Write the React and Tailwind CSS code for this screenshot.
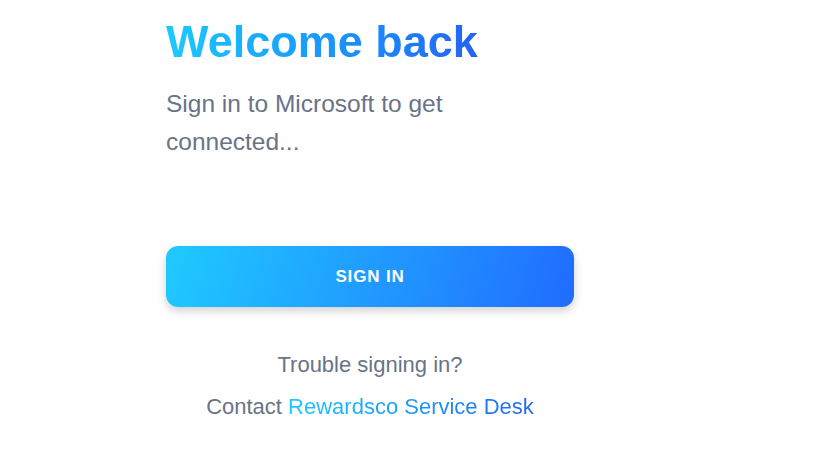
export default function App() {
  return (
    <div
      className="min-h-screen bg-white"
      style={{ fontFamily: '"Liberation Sans", Arial, sans-serif' }}
    >
      <div className="w-[408px] ml-[166px] pt-[15px]">
        <h1 className="text-[45px] leading-[54px] font-bold bg-gradient-to-r from-[#1fc9ff] to-[#2563f4] bg-clip-text text-transparent w-max">
          Welcome back
        </h1>
        <p className="mt-4 text-[24.5px] leading-[38px] text-[#697387] w-[330px]">
          Sign in to Microsoft to get connected...
        </p>
        <button className="mt-[85px] w-full h-[61px] rounded-xl bg-linear-[105deg] from-[#1fcaff] to-[#216cff] text-white font-bold text-[17px] tracking-wider shadow-[0_4px_10px_rgba(0,0,0,0.18)]">
          SIGN IN
        </button>
        <div className="mt-[37px] text-center text-[22px] leading-[42px] text-[#697387]">
          <p>Trouble signing in?</p>
          <p>
            Contact{" "}
            <a className="bg-gradient-to-r from-[#1fc9ff] to-[#2563f4] bg-clip-text text-transparent">
              Rewardsco Service Desk
            </a>
          </p>
        </div>
      </div>
    </div>
  );
}
